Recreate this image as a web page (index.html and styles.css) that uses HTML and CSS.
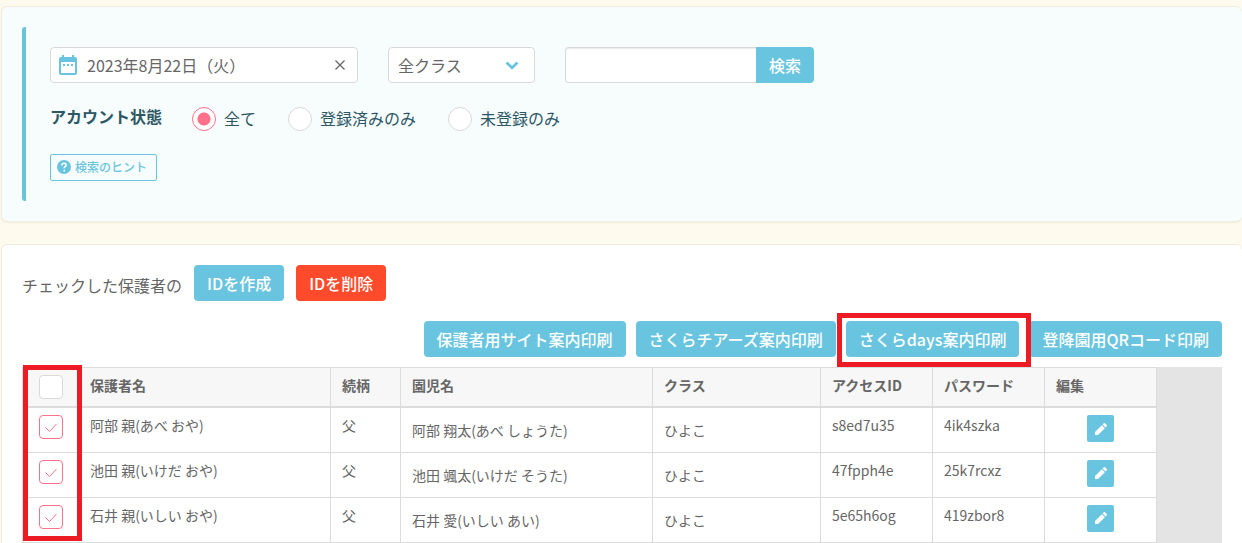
FILE: index.html
```html
<!DOCTYPE html>
<html lang="ja">
<head>
<meta charset="utf-8">
<meta name="viewport" content="width=device-width, initial-scale=1">
<title>保護者アカウント管理</title>
<link rel="stylesheet" href="styles.css">
</head>
<body>
<svg class="sprite" aria-hidden="true">
  <symbol id="icon-pencil" viewBox="0 0 24 24"><path d="M3 16.500V21h4.500L17.800 10.700l-4.500-4.500L3 16.500zM20.700 7.800c.5-.5.5-1.200 0-1.700l-2.800-2.800c-.5-.5-1.200-.5-1.700 0l-1.900 1.900 4.500 4.500 1.900-1.900z"/></symbol>
</svg>
<main class="page">
  <form class="panel panel-search" onsubmit="return false">
    <div class="search-body">
      <div class="filters">
        <div class="date-field">
          <svg class="date-icon" viewBox="0 0 18 20" aria-hidden="true"><path fill-rule="evenodd" d="M3 0h2v2h8V0h2v2h1a2 2 0 0 1 2 2v14a2 2 0 0 1-2 2H2a2 2 0 0 1-2-2V4a2 2 0 0 1 2-2h1zM2 7v11h14V7zM4 9h2v2H4zM8 9h2v2H8zM12 9h2v2h-2z"/></svg>
          <input class="date-input" type="text" value="2023年8月22日（火）" aria-label="日付">
          <button class="date-clear" type="button" aria-label="クリア"><svg viewBox="0 0 10 10" aria-hidden="true"><path d="M.5.5l9 9M9.500.5l-9 9"/></svg></button>
        </div>
        <div class="select-field">
          <select class="select" aria-label="クラス"><option>全クラス</option></select>
          <svg class="select-arrow" viewBox="0 0 14 9" aria-hidden="true"><path d="M1.500 1.500L7 6.700l5.500-5.200"/></svg>
        </div>
        <div class="keyword">
          <input class="keyword-input" type="text" aria-label="キーワード">
          <button class="btn keyword-btn" type="submit">検索</button>
        </div>
      </div>
      <div class="status" role="radiogroup" aria-labelledby="status-label">
        <span class="status-label" id="status-label">アカウント状態</span>
        <label class="radio"><input type="radio" name="status" checked><span>全て</span></label>
        <label class="radio"><input type="radio" name="status"><span>登録済みのみ</span></label>
        <label class="radio"><input type="radio" name="status"><span>未登録のみ</span></label>
      </div>
      <button class="hint" type="button"><svg viewBox="0 0 14 14" aria-hidden="true"><circle cx="7" cy="7" r="7"/><path d="M4.900 5.400c0-1.300.9-2.100 2.100-2.100s2.100.8 2.100 1.900c0 1.500-1.900 1.500-1.900 3.100M7.200 9.800v1.600"/></svg>検索のヒント</button>
    </div>
  </form>

  <section class="panel panel-list">
    <div class="bulk">
      <span class="bulk-label">チェックした保護者の</span>
      <button class="btn" type="button">IDを作成</button>
      <button class="btn btn-danger" type="button">IDを削除</button>
    </div>
    <div class="prints">
      <button class="btn" type="button">保護者用サイト案内印刷</button>
      <button class="btn" type="button">さくらチアーズ案内印刷</button>
      <div class="marked"><button class="btn" type="button">さくらdays案内印刷</button></div>
      <button class="btn" type="button">登降園用QRコード印刷</button>
    </div>
    <div class="table-wrap">
      <table class="table">
        <colgroup><col class="c-check"><col class="c-name"><col class="c-rel"><col class="c-name"><col class="c-class"><col class="c-id"><col class="c-id"><col class="c-id"></colgroup>
        <thead>
          <tr><th class="check"><input type="checkbox" aria-label="すべて選択"></th><th>保護者名</th><th>続柄</th><th>園児名</th><th>クラス</th><th>アクセスID</th><th>パスワード</th><th>編集</th></tr>
        </thead>
        <tbody>
          <tr><td class="check"><input type="checkbox" checked aria-label="阿部 親"></td><td>阿部 親(あべ おや)</td><td>父</td><td class="mid">阿部 翔太(あべ しょうた)</td><td class="mid">ひよこ</td><td>s8ed7u35</td><td>4ik4szka</td><td class="edit"><button type="button" aria-label="編集"><svg aria-hidden="true"><use href="#icon-pencil"/></svg></button></td></tr>
          <tr><td class="check"><input type="checkbox" checked aria-label="池田 親"></td><td>池田 親(いけだ おや)</td><td>父</td><td class="mid">池田 颯太(いけだ そうた)</td><td class="mid">ひよこ</td><td>47fpph4e</td><td>25k7rcxz</td><td class="edit"><button type="button" aria-label="編集"><svg aria-hidden="true"><use href="#icon-pencil"/></svg></button></td></tr>
          <tr><td class="check"><input type="checkbox" checked aria-label="石井 親"></td><td>石井 親(いしい おや)</td><td>父</td><td class="mid">石井 愛(いしい あい)</td><td class="mid">ひよこ</td><td>5e65h6og</td><td>419zbor8</td><td class="edit"><button type="button" aria-label="編集"><svg aria-hidden="true"><use href="#icon-pencil"/></svg></button></td></tr>
        </tbody>
      </table>
    </div>
  </section>
</main>
</body>
</html>
```
FILE: styles.css
```css
*, ::before, ::after { box-sizing: border-box; }

body {
  margin: 0;
  overflow-x: hidden;
  background: #fffaee;
  color: #666;
  font: 16px/24px "Noto Sans CJK JP", sans-serif;
}

button, input, select { margin: 0; font: inherit; color: inherit; }
button { padding: 0; border: 0; cursor: pointer; }
.sprite { display: none; }

.page {
  display: flex;
  flex-direction: column;
  gap: 22px;
  padding: 6px 0 0 1px;
}

.panel {
  padding: 20px;
  border: 1px solid #f0ebdd;
  border-right: 0;
  border-radius: 6px;
  background: #fff;
}
.panel-search { background: #f7fdfd; box-shadow: 0 1px 2px rgba(0, 0, 0, .06); }
.panel-list { padding-bottom: 0; border-bottom: 0; border-radius: 6px 6px 0 0; }

.search-body {
  display: flex;
  flex-direction: column;
  align-items: flex-start;
  padding: 20px 0 20px 24px;
  border-left: 4px solid #69c5df;
  border-radius: 3px 0 0 3px;
}

.filters { display: flex; flex-wrap: wrap; gap: 30px; }

.date-field {
  display: flex;
  align-items: center;
  width: 308px;
  height: 36px;
  padding: 0 12px 0 8px;
  border: 1px solid #d9d9d9;
  border-radius: 4px;
  background: #fff;
}
.date-icon { width: 18px; height: 20px; fill: #69c5df; }
.date-input {
  flex: 1;
  min-width: 0;
  padding: 0 10px;
  border: 0;
  outline: 0;
  background: none;
}
.date-clear { display: grid; background: none; }
.date-clear svg { width: 10px; height: 10px; stroke: #666; stroke-width: 1.300; }

.select-field { display: grid; align-items: center; width: 147px; }
.select {
  grid-area: 1 / 1;
  width: 100%;
  height: 36px;
  padding: 0 9px;
  border: 1px solid #d9d9d9;
  border-radius: 4px;
  background: #fff;
  appearance: none;
}
.select-arrow {
  grid-area: 1 / 1;
  justify-self: end;
  width: 14px;
  height: 9px;
  margin-right: 16px;
  fill: none;
  stroke: #69c5df;
  stroke-width: 2.800;
  pointer-events: none;
}

.keyword { display: flex; }
.keyword-input {
  width: 191px;
  height: 36px;
  padding: 0 10px;
  border: 1px solid #d9d9d9;
  border-right: 0;
  border-radius: 4px 0 0 4px;
  background: #fff;
  box-shadow: inset 0 1px 1px rgba(0, 0, 0, .08);
}
.keyword .keyword-btn { border-radius: 0 4px 4px 0; }

.btn {
  height: 36px;
  padding: 0 13px;
  border-radius: 4px;
  background: #69c5df;
  color: #fff;
  font-weight: 500;
  white-space: nowrap;
}
.btn-danger { background: #ff4b2b; }

.status {
  display: flex;
  flex-wrap: wrap;
  align-items: center;
  margin: 24px 0 23px;
  color: #2d5765;
}
.status-label { margin-right: 30px; padding-bottom: 6px; line-height: 18px; font-weight: 700; }
.radio { display: flex; align-items: center; gap: 8px; margin-right: 32px; }
.radio span { padding-bottom: 2px; line-height: 22px; }
.radio input {
  width: 24px;
  height: 24px;
  border: 1px solid #d9d9d9;
  border-radius: 50%;
  background: #fff;
  appearance: none;
}
.radio input:checked {
  border-color: #ff708b;
  background: radial-gradient(circle, #ff708b 6px, #fff 7px);
}

.hint {
  display: flex;
  align-items: center;
  gap: 4px;
  height: 27px;
  padding: 0 9px 2px 6px;
  border: 1px solid #69c5df;
  border-radius: 2px;
  background: none;
  color: #69c5df;
  font-size: 12px;
  font-weight: 500;
}
.hint svg { width: 14px; height: 14px; fill: #69c5df; }
.hint path { fill: none; stroke: #fff; stroke-width: 1.500; }

.bulk { display: flex; flex-wrap: wrap; align-items: center; gap: 12px; }
.bulk-label { padding-top: 4px; }

.prints {
  display: flex;
  flex-wrap: wrap;
  justify-content: flex-end;
  gap: 10px;
  margin: 20px 0 10px;
}
.marked { position: relative; }
.marked::after,
.table-wrap::after {
  content: "";
  position: absolute;
  border: 5px solid #ed1c24;
  pointer-events: none;
}
.marked::after { inset: -8px -12px -10px -9px; }

.table-wrap { position: relative; background: #e4e4e4; }
.table-wrap::after { top: -2px; bottom: 2px; left: 1px; width: 59px; }

.table {
  width: 1135px;
  border-collapse: collapse;
  table-layout: fixed;
  background: #fff;
  font-size: 14px;
  line-height: 20px;
}
.c-check { width: 56px; }
.c-name { width: 252px; }
.c-rel { width: 70px; }
.c-class { width: 168px; }
.c-id { width: 112px; }

.table th, .table td {
  height: 45px;
  padding: 7px 11px;
  border: 1px solid #dcdcdc;
  text-align: left;
  vertical-align: top;
}
.table th { height: 39px; border-bottom-width: 2px; background: #f7f7f7; font-weight: 700; }
.table .mid { vertical-align: middle; }
.table .check, .table .edit { padding: 7px 0; }
.check input {
  display: block;
  width: 24px;
  height: 24px;
  margin: 0 auto;
  border: 1px solid #d9d9d9;
  border-radius: 4px;
  background: #fff;
  appearance: none;
}
.check input:checked {
  border-color: #ff708b;
  background: #fff url("data:image/svg+xml,%3Csvg xmlns='http://www.w3.org/2000/svg' viewBox='0 0 22 22'%3E%3Cpath d='M5.500 11.500l4 4 7-7.500' fill='none' stroke='%23ff708b'/%3E%3C/svg%3E");
}
.edit button {
  display: grid;
  place-items: center;
  width: 27px;
  height: 27px;
  margin: 0 auto;
  border-radius: 2px;
  background: #69c5df;
}
.edit svg { width: 16px; height: 16px; fill: #fff; }
```
